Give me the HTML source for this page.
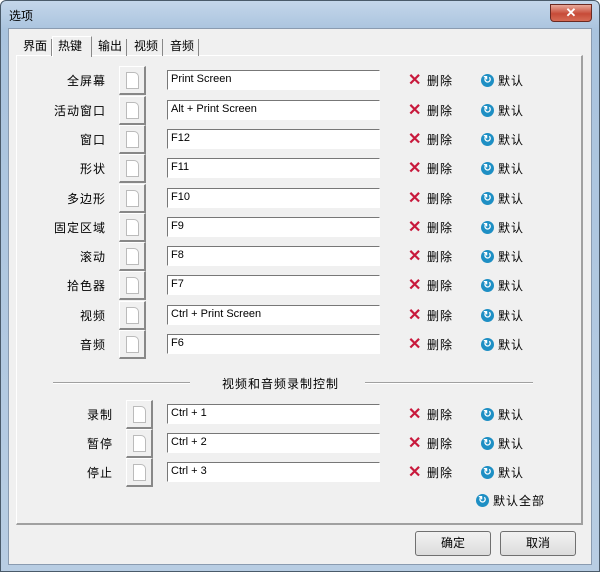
<!DOCTYPE html>
<html><head><meta charset="utf-8"><style>
*{margin:0;padding:0;box-sizing:border-box}
body{width:600px;height:572px;overflow:hidden;background:#fff;font-family:"Liberation Sans","Noto Sans CJK SC",sans-serif;font-size:12px;color:#000}
.win{position:absolute;left:0;top:0;width:600px;height:572px;border:1px solid #4a5a6a;border-radius:6px 6px 0 0;background:linear-gradient(#c4d6ea,#a9c3de 30px,#b8cde3);}
.title{position:absolute;left:8px;top:6px;font-size:12px}
.close{position:absolute;left:549px;top:3px;width:42px;height:18px;border:1px solid #6b2a22;border-radius:0 0 4px 4px;background:linear-gradient(#e9a99a,#c74b38 55%,#d66b55);color:#fff;text-align:center;font-weight:bold;font-size:13px;line-height:16px}
.client{position:absolute;left:8px;top:28px;width:584px;height:537px;background:#f0f0f0;border:1px solid #8a9bb0}
.panel{position:absolute;left:16px;top:55px;width:567px;height:470px;border:1px solid #fff;border-right-color:#a0a0a0;border-bottom-color:#a0a0a0;border-right-width:2px;border-bottom-width:2px;background:#f0f0f0}
.tab{position:absolute;top:39px;height:17px;font-size:12px;line-height:15px;padding:0 4px;border-right:1px solid #888}
.abs{position:absolute}
.lbl{position:absolute;text-align:right;font-size:12px;letter-spacing:1px}
.btn{position:absolute;width:27px;height:29px;background:#f0f0f0;border:1px solid #fff;border-right:2px solid #888;border-bottom:2px solid #888}
.btn i{position:absolute;left:6px;top:5px;width:13px;height:17px;background:#fff;border:1px solid #bbb;border-radius:0 5px 0 0}
.inp{position:absolute;left:167px;width:213px;height:20px;background:#fff;border:1px solid #fff;border-top:1px solid #777;border-left:1px solid #777;font-size:11px;line-height:16px;padding-left:3px}
.x{position:absolute;color:#c8193c;font-size:16px;font-weight:bold;line-height:14px}
.d{position:absolute;width:13px;height:13px;border-radius:50%;background:#1e8fc4;color:#fff;font-size:10px;text-align:center;line-height:13px;font-weight:bold}
.t{position:absolute;font-size:12px;letter-spacing:1px}
.pb{position:absolute;top:531px;width:76px;height:25px;border:1px solid #707070;border-radius:3px;background:linear-gradient(#f2f2f2,#dcdcdc);text-align:center;line-height:22px}
</style></head><body>
<div class="win">
<div class="title">选项</div>
<div class="close">✕</div>
</div>
<div class="client"></div>
<div class="panel"></div>
<div class="tab" style="left:19px">界面</div>
<div class="abs" style="left:52px;top:36px;width:40px;height:21px;background:#f0f0f0;border:1px solid #fff;border-bottom:none;border-right:1px solid #888;padding-left:5px;line-height:19px">热键</div>
<div class="tab" style="left:94px">输出</div>
<div class="tab" style="left:130px">视频</div>
<div class="tab" style="left:166px">音频</div>

<div id="rows"></div>
<script>
var rows=[["全屏幕","Print Screen",80],["活动窗口","Alt + Print Screen",110],["窗口","F12",139],["形状","F11",168],["多边形","F10",198],["固定区域","F9",227],["滚动","F8",256],["拾色器","F7",285],["视频","Ctrl + Print Screen",315],["音频","F6",344]];
var low=[["录制","Ctrl + 1",414],["暂停","Ctrl + 2",443],["停止","Ctrl + 3",472]];
var h="";
function row(r,lr,bx){var c=r[2];
h+='<div class="lbl" style="left:0;width:'+lr+'px;top:'+(c-8)+'px">'+r[0]+'</div>';
h+='<div class="btn" style="left:'+bx+'px;top:'+(c-14)+'px"><i></i></div>';
h+='<div class="inp" style="top:'+(c-10)+'px">'+r[1]+'</div>';
h+='<div class="x" style="left:408px;top:'+(c-6)+'px">✕</div><div class="t" style="left:427px;top:'+(c-8)+'px">删除</div>';
h+='<div class="d" style="left:481px;top:'+(c-6)+'px">↻</div><div class="t" style="left:498px;top:'+(c-8)+'px">默认</div>';}
rows.forEach(function(r){row(r,106,119)});
low.forEach(function(r){row(r,113,126)});
document.getElementById('rows').innerHTML=h;
</script>
<div class="abs" style="left:53px;top:382px;width:137px;border-top:1px solid #a0a0a0;border-bottom:1px solid #fff"></div>
<div class="abs" style="left:365px;top:382px;width:168px;border-top:1px solid #a0a0a0;border-bottom:1px solid #fff"></div>
<div class="t" style="left:222px;top:375px">视频和音频录制控制</div>
<div class="d" style="left:476px;top:494px">↻</div><div class="t" style="left:493px;top:492px">默认全部</div>
<div class="pb" style="left:415px">确定</div>
<div class="pb" style="left:500px">取消</div>
</body></html>
